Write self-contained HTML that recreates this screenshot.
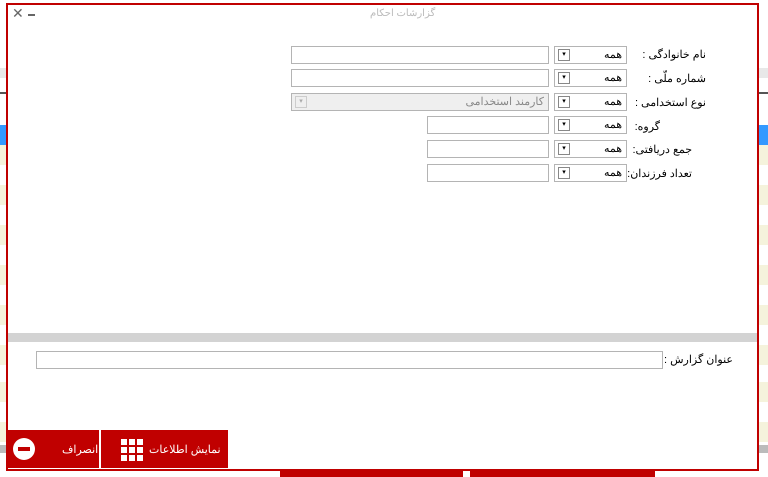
<!DOCTYPE html>
<html><head><meta charset="utf-8"><style>
*{box-sizing:border-box;margin:0;padding:0}
body{width:768px;height:477px;overflow:hidden;background:#fff;position:relative;font-family:Tahoma,"Liberation Sans","Noto Sans CJK SC",sans-serif;font-size:11px;color:#000}
.abs{position:absolute}
.dlg{left:6px;top:3px;width:753px;height:468px;border:2px solid #c00000;background:#fff}
.inp{position:absolute;background:#fff;border:1px solid #b4b4b4;height:18px}
.cmb{position:absolute;background:#fff;border:1px solid #b4b4b4;height:18px;width:73px;text-align:right;padding-right:4px;line-height:16px;font-size:11px}
.cmb i{position:absolute;left:3px;top:2px;width:12px;height:12px;border:1px solid #888;font-style:normal;font-size:7px;line-height:10px;text-align:center}
.lbl{position:absolute;font-size:11px;direction:rtl;white-space:nowrap}
.btn{position:absolute;top:430px;height:38px;background:#c00000;color:#fff;font-size:11px}
</style></head><body>
<div class="abs" style="left:0;top:68px;width:768px;height:10px;background:#e8e8e8"></div>
<div class="abs" style="left:0;top:92px;width:768px;height:2px;background:#555"></div>
<div class="abs" style="left:0;top:125px;width:768px;height:20px;background:#3399ff"></div>
<div class="abs" style="left:0;top:145px;width:768px;height:20px;background:#f5f3dc"></div>
<div class="abs" style="left:0;top:185px;width:768px;height:20px;background:#f5f3dc"></div>
<div class="abs" style="left:0;top:225px;width:768px;height:20px;background:#f5f3dc"></div>
<div class="abs" style="left:0;top:265px;width:768px;height:20px;background:#f5f3dc"></div>
<div class="abs" style="left:0;top:305px;width:768px;height:20px;background:#f5f3dc"></div>
<div class="abs" style="left:0;top:345px;width:768px;height:20px;background:#f5f3dc"></div>
<div class="abs" style="left:0;top:382px;width:768px;height:20px;background:#f5f3dc"></div>
<div class="abs" style="left:0;top:422px;width:768px;height:20px;background:#f5f3dc"></div>
<div class="abs" style="left:0;top:445px;width:768px;height:8px;background:#bbb"></div>
<div class="abs" style="left:280px;top:468px;width:183px;height:9px;background:#c00000"></div>
<div class="abs" style="left:470px;top:468px;width:185px;height:9px;background:#c00000"></div>

<div class="abs dlg"></div>
<div class="abs" style="left:12px;top:5px;font-size:14px;color:#666">✕</div>
<div class="abs" style="left:28px;top:14px;width:7px;height:2px;background:#666"></div>
<div class="lbl" style="left:370px;top:8px;color:#bbb;font-size:10px">گزارشات احکام</div>

<div class="inp" style="left:291px;top:46px;width:258px"></div>
<div class="cmb" style="left:554px;top:46px">همه<i>▾</i></div>
<div class="lbl" style="right:62px;top:48px">نام خانوادگی :</div>

<div class="inp" style="left:291px;top:69px;width:258px"></div>
<div class="cmb" style="left:554px;top:69px">همه<i>▾</i></div>
<div class="lbl" style="right:62px;top:72px">شماره ملّی :</div>

<div class="inp" style="left:291px;top:93px;width:258px;background:#efefef;color:#888;text-align:right;padding-right:4px;line-height:16px;direction:rtl">کارمند استخدامی<span style="position:absolute;left:3px;top:2px;width:12px;height:12px;border:1px solid #ccc;font-size:7px;line-height:10px;text-align:center;color:#aaa">▾</span></div>
<div class="cmb" style="left:554px;top:93px">همه<i>▾</i></div>
<div class="lbl" style="right:62px;top:96px">نوع استخدامی :</div>

<div class="inp" style="left:427px;top:116px;width:122px"></div>
<div class="cmb" style="left:554px;top:116px">همه<i>▾</i></div>
<div class="lbl" style="right:108px;top:120px">گروه:</div>

<div class="inp" style="left:427px;top:140px;width:122px"></div>
<div class="cmb" style="left:554px;top:140px">همه<i>▾</i></div>
<div class="lbl" style="right:76px;top:143px">جمع دریافتی:</div>

<div class="inp" style="left:427px;top:164px;width:122px"></div>
<div class="cmb" style="left:554px;top:164px">همه<i>▾</i></div>
<div class="lbl" style="right:76px;top:167px">تعداد فرزندان:</div>

<div class="abs" style="left:8px;top:333px;width:749px;height:9px;background:#d3d3d3"></div>
<div class="inp" style="left:36px;top:351px;width:627px"></div>
<div class="lbl" style="right:35px;top:353px">عنوان گزارش :</div>

<div class="btn" style="left:8px;width:91px">
  <div class="abs" style="left:5px;top:8px;width:22px;height:22px;border-radius:50%;background:#fff"></div>
  <div class="abs" style="left:10px;top:17px;width:12px;height:4px;background:#c00000"></div>
  <div class="abs" style="left:54px;top:13px;direction:rtl">انصراف</div>
</div>
<div class="btn" style="left:101px;width:127px">
  <div class="abs" style="left:20px;top:9px;width:22px;height:22px;background:
   linear-gradient(#c00000,#c00000) 6px 0/2px 22px no-repeat,
   linear-gradient(#c00000,#c00000) 14px 0/2px 22px no-repeat,
   linear-gradient(#c00000,#c00000) 0 6px/22px 2px no-repeat,
   linear-gradient(#c00000,#c00000) 0 14px/22px 2px no-repeat,#fff"></div>
  <div class="abs" style="left:48px;top:13px;direction:rtl;white-space:nowrap">نمایش اطلاعات</div>
</div>
</body></html>
